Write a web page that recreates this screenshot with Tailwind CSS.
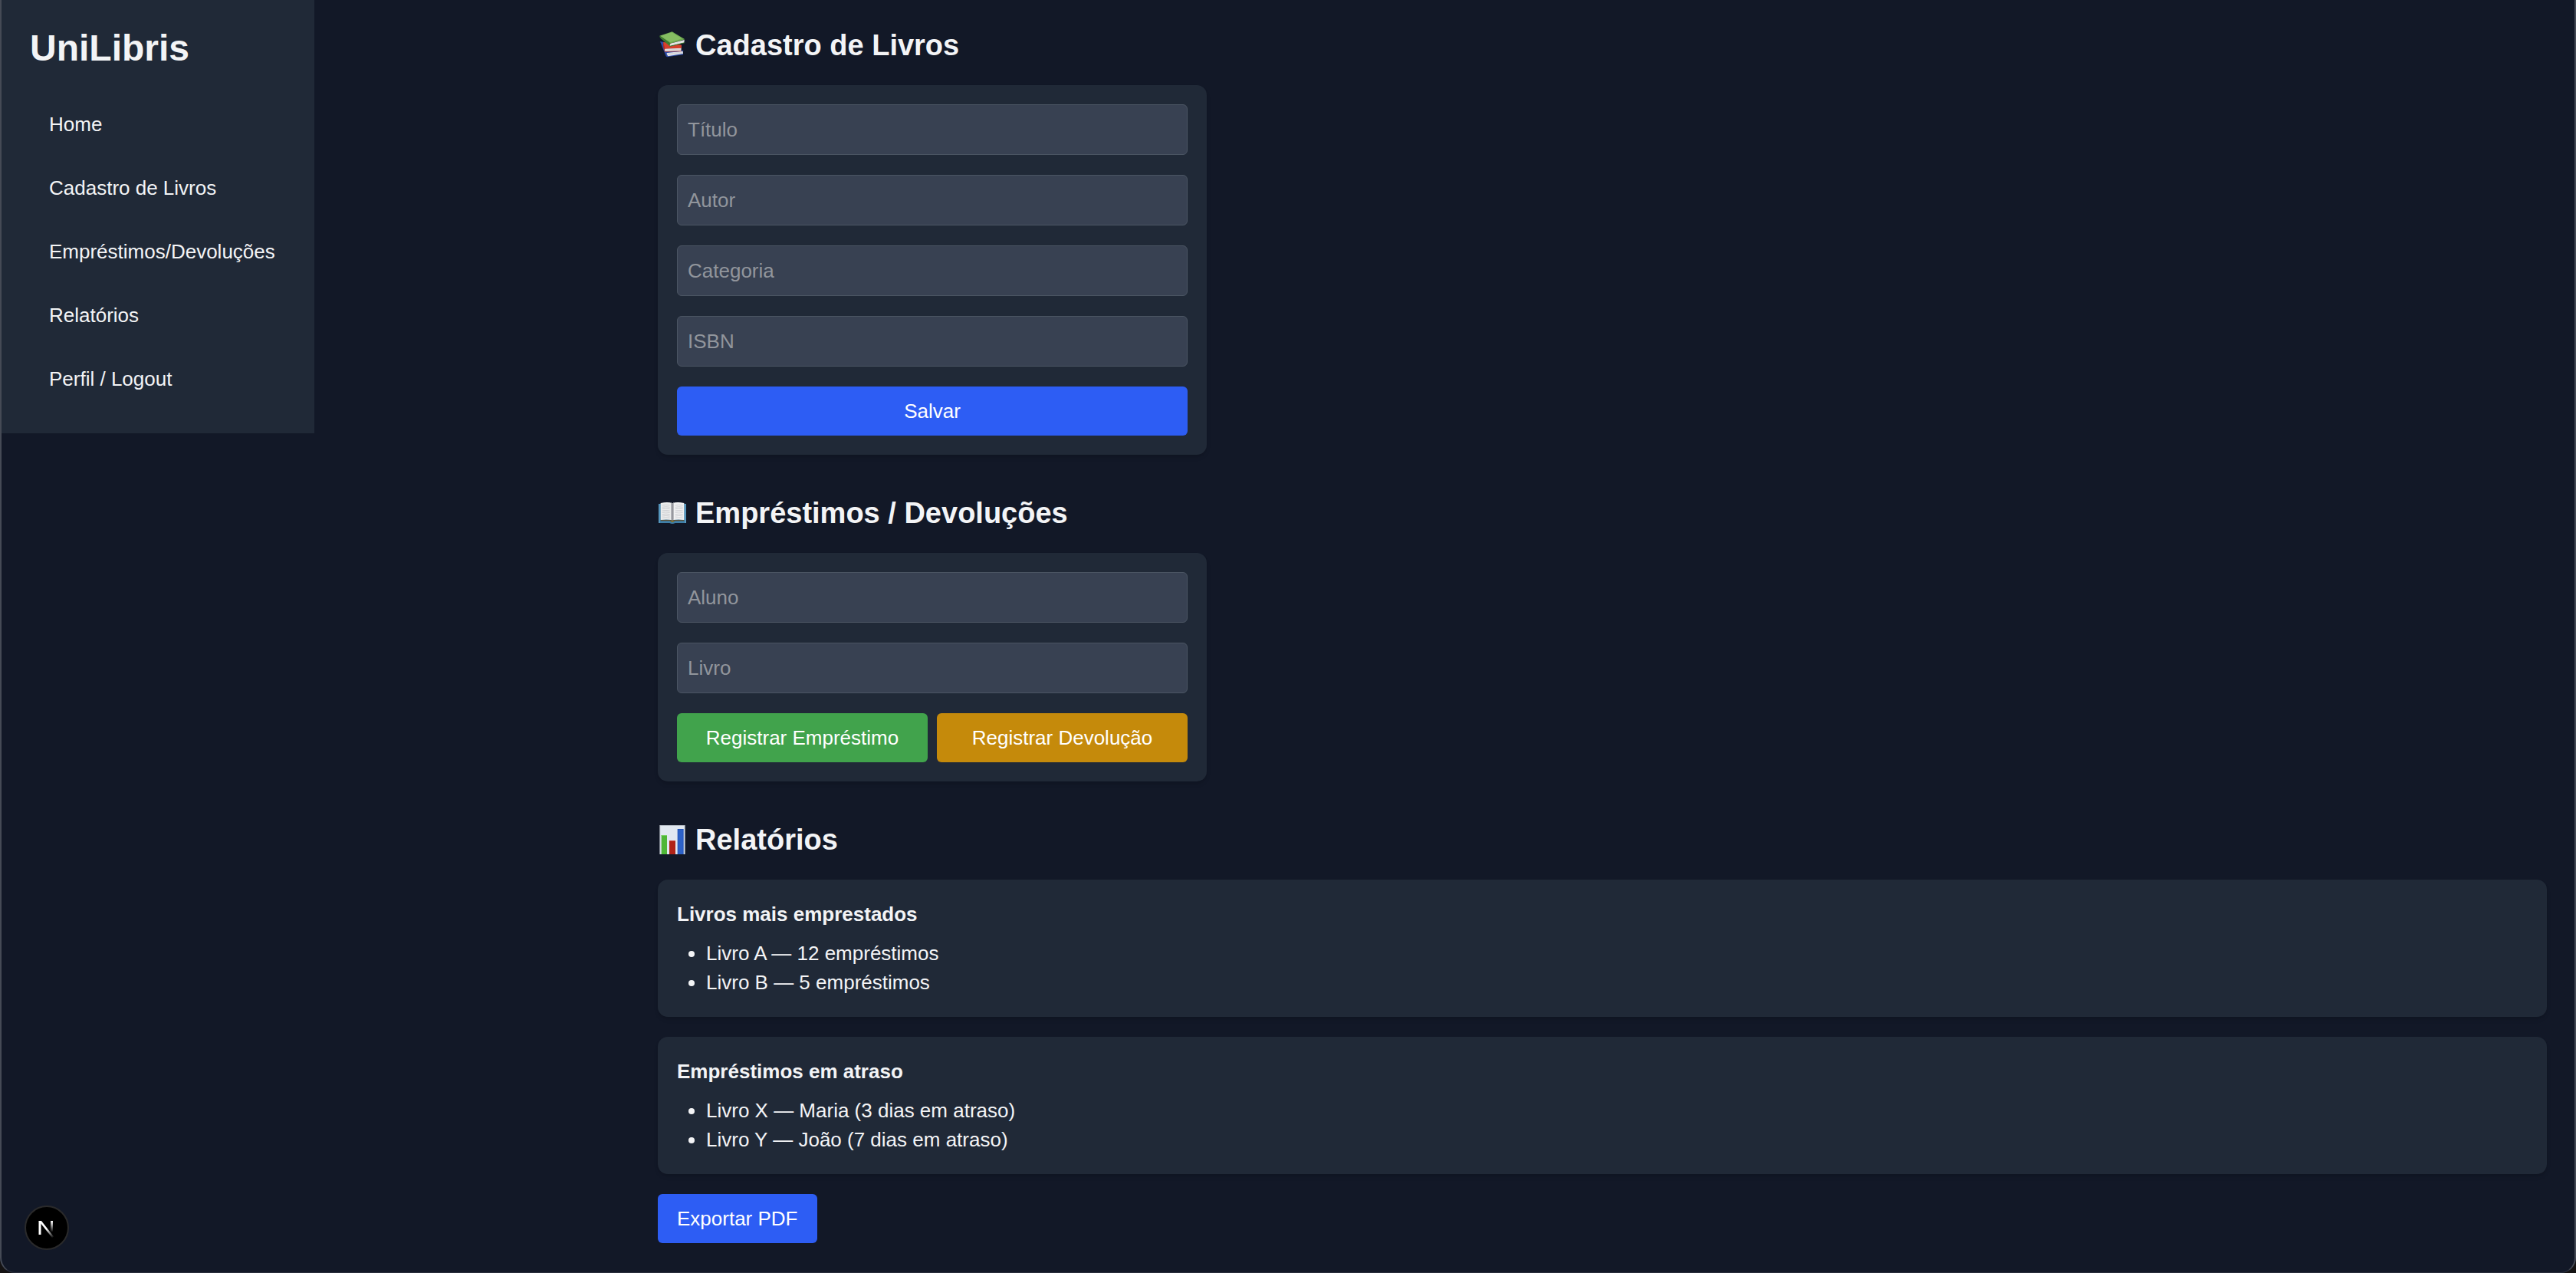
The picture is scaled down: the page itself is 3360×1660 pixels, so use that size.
<!DOCTYPE html>
<html lang="pt-BR">
<head>
<meta charset="utf-8">
<title>UniLibris</title>
<script src="https://cdn.jsdelivr.net/npm/@tailwindcss/browser@4"></script>
</head>
<body class="min-h-screen bg-[#121827] font-['Liberation_Sans',Arial,sans-serif] text-[26px] leading-[38px] text-gray-100">
<div class="flex items-start">
  <aside class="w-[410px] shrink-0 bg-[#202937] px-[39px] pt-[34px] pb-[39px]">
    <h1 class="mb-[38px] text-[48px] leading-[58px] font-bold">UniLibris</h1>
    <nav class="flex flex-col gap-[19px]">
      <a href="#" class="rounded-md px-[25px] py-[13px] whitespace-nowrap">Home</a>
      <a href="#cadastro" class="rounded-md px-[25px] py-[13px] whitespace-nowrap">Cadastro de Livros</a>
      <a href="#emprestimos" class="rounded-md px-[25px] py-[13px] whitespace-nowrap">Empréstimos/Devoluções</a>
      <a href="#relatorios" class="rounded-md px-[25px] py-[13px] whitespace-nowrap">Relatórios</a>
      <a href="#perfil" class="rounded-md px-[25px] py-[13px] whitespace-nowrap">Perfil / Logout</a>
    </nav>
  </aside>

  <main class="ml-[410px] flex min-w-0 flex-1 flex-col gap-[51px] px-[38px] pt-[34px] pb-[38px]">
    <section id="cadastro">
      <h2 class="mb-[26px] flex items-center gap-[11px] text-[38px] leading-[51px] font-bold">
        <svg class="h-[39px] w-[38px]" viewBox="24 30 114 117" aria-hidden="true">
          <path d="M33 72l12 2 78 36v14l-63 9-4-3z" fill="#2b4aa8"/>
          <path d="M59 117l63-7 1 10-59 10q-6-5-5-13z" fill="#e4e6ea"/>
          <path d="M60 121l61-7M61 125l61-7" stroke="#a9adb8" stroke-width="1"/>
          <path d="M56 114l68-6" stroke="#27449f" stroke-width="3"/>
          <path d="M45 74l72 12v12l-66 4z" fill="#d6402c"/>
          <path d="M45 74q-2 22 7 39l64-2v-3l-62-1z" fill="#b92b20"/>
          <path d="M52 101l64-3-1 11-62 2q-4-5-1-10z" fill="#e9e7e5"/>
          <path d="M53 105l62-3M54 108l61-3" stroke="#b5b1b0" stroke-width="1"/>
          <path d="M31 50l49-16 50 30-56 16z" fill="#6faa50"/>
          <path d="M35 50l44-13 40 24-46 14z" fill="#85bd62"/>
          <path d="M31 50l43 30-3 11-35-30q-6-6-5-11z" fill="#3d7f2e"/>
          <path d="M74 80l54-14-1 11-55 14q-3-5 2-11z" fill="#f3f4f1"/>
          <path d="M73 84l54-14M72 88l55-14" stroke="#b4b9b3" stroke-width="1"/>
          <path d="M71 91l59-14" stroke="#2f6b26" stroke-width="3"/>
        </svg>
        Cadastro de Livros
      </h2>
      <form class="flex max-w-[716px] flex-col gap-[26px] rounded-[13px] bg-[#202937] p-[25px] shadow-md">
        <input type="text" aria-label="Título" placeholder="Título" class="w-full rounded-md border border-[#4b5563] bg-[#384152] px-[13px] py-[13px] placeholder:text-[#91959c]">
        <input type="text" aria-label="Autor" placeholder="Autor" class="w-full rounded-md border border-[#4b5563] bg-[#384152] px-[13px] py-[13px] placeholder:text-[#91959c]">
        <input type="text" aria-label="Categoria" placeholder="Categoria" class="w-full rounded-md border border-[#4b5563] bg-[#384152] px-[13px] py-[13px] placeholder:text-[#91959c]">
        <input type="text" aria-label="ISBN" placeholder="ISBN" class="w-full rounded-md border border-[#4b5563] bg-[#384152] px-[13px] py-[13px] placeholder:text-[#91959c]">
        <button type="button" class="w-full rounded-md bg-[#2d5df4] py-[13px] text-white">Salvar</button>
      </form>
    </section>

    <section id="emprestimos">
      <h2 class="mb-[26px] flex items-center gap-[11px] text-[38px] leading-[51px] font-bold">
        <svg class="h-[39px] w-[38px]" viewBox="24 30 114 117" aria-hidden="true">
          <path d="M27 51h108v75H92q-11 6-22 0H27z" fill="#3f7fa8"/>
          <path d="M27 51h5v75h-5zM130 51h5v75h-5z" fill="#5a9cc4"/>
          <path d="M35 113h92v5H91q-10 8-20 0H35z" fill="#5b5136"/>
          <path d="M74 118h14q-1 5-7 5t-7-5z" fill="#8b7a2c"/>
          <path d="M35 48q30-6 46 1v66q-20-5-46-1z" fill="#eceded"/>
          <path d="M127 48q-30-6-46 1v66q20-5 46-1z" fill="#f2f2f3"/>
          <path d="M75 46l6 3v66l-6-2zM87 46l-6 3v66l6-2z" fill="#b9bbc0"/>
          <path d="M81 48v68" stroke="#55565c" stroke-width="2"/>
          <path d="M41 57q15-3 30 0M41 64q15-3 30 0M41 71q15-3 30 0M41 78q15-3 30 0M41 85q15-3 30 0M41 92q15-3 30 0M41 99q15-3 30 0M41 106q15-3 30 0M92 57q15-3 30 0M92 64q15-3 30 0M92 71q15-3 30 0M92 78q15-3 30 0M92 85q15-3 30 0M92 92q15-3 30 0M92 99q15-3 30 0M92 106q15-3 30 0" fill="none" stroke="#b9bbc1" stroke-width="2"/>
        </svg>
        Empréstimos / Devoluções
      </h2>
      <form class="flex max-w-[716px] flex-col gap-[26px] rounded-[13px] bg-[#202937] p-[25px] shadow-md">
        <input type="text" aria-label="Aluno" placeholder="Aluno" class="w-full rounded-md border border-[#4b5563] bg-[#384152] px-[13px] py-[13px] placeholder:text-[#91959c]">
        <input type="text" aria-label="Livro" placeholder="Livro" class="w-full rounded-md border border-[#4b5563] bg-[#384152] px-[13px] py-[13px] placeholder:text-[#91959c]">
        <div class="grid grid-cols-2 gap-[12px]">
          <button type="button" class="rounded-md bg-[#41a34c] py-[13px] text-white">Registrar Empréstimo</button>
          <button type="button" class="rounded-md bg-[#c58a0b] py-[13px] text-white">Registrar Devolução</button>
        </div>
      </form>
    </section>

    <section id="relatorios">
      <h2 class="mb-[26px] flex items-center gap-[11px] text-[38px] leading-[51px] font-bold">
        <svg class="h-[39px] w-[38px]" viewBox="24 33 114 117" aria-hidden="true">
          <path d="M31 33h100v114H31z" fill="#b9c0c9"/>
          <path d="M34 36h94v111H34z" fill="#e1e8f1"/>
          <path d="M38 72h22v75H38z" fill="#4fb737"/>
          <path d="M38 72h22v3H38z" fill="#77cf62"/>
          <path d="M69 93h24v54H69z" fill="#b02318"/>
          <path d="M69 93h24v3H69z" fill="#cc4a3e"/>
          <path d="M101 48h24v99h-24z" fill="#2456b8"/>
          <path d="M104 51h18v96h-18z" fill="#2d62c8"/>
        </svg>
        Relatórios
      </h2>
      <div class="flex flex-col items-start gap-[26px]">
        <article class="w-full rounded-[13px] bg-[#202937] px-[25px] py-[26px] shadow-md">
          <h3 class="mb-[13px] font-bold">Livros mais emprestados</h3>
          <ul class="list-disc pl-[38px]">
            <li>Livro A — 12 empréstimos</li>
            <li>Livro B — 5 empréstimos</li>
          </ul>
        </article>
        <article class="w-full rounded-[13px] bg-[#202937] px-[25px] py-[26px] shadow-md">
          <h3 class="mb-[13px] font-bold">Empréstimos em atraso</h3>
          <ul class="list-disc pl-[38px]">
            <li>Livro X — Maria (3 dias em atraso)</li>
            <li>Livro Y — João (7 dias em atraso)</li>
          </ul>
        </article>
        <button type="button" class="rounded-md bg-[#2d5df4] px-[25px] py-[13px] text-white">Exportar PDF</button>
      </div>
    </section>
  </main>
</div>

<button type="button" aria-label="Next.js" class="fixed bottom-[30px] left-[32px] size-[58px] rounded-full">
  <svg class="size-full" viewBox="0 0 58 58" fill="none" aria-hidden="true">
    <defs>
      <linearGradient id="stem" x1="0" y1="20" x2="0" y2="35" gradientUnits="userSpaceOnUse"><stop stop-color="#fff"/><stop offset="1" stop-color="#fff" stop-opacity="0"/></linearGradient>
      <linearGradient id="diag" x1="29" y1="30" x2="38" y2="42" gradientUnits="userSpaceOnUse"><stop stop-color="#fff"/><stop offset="1" stop-color="#fff" stop-opacity="0"/></linearGradient>
    </defs>
    <circle cx="29" cy="29" r="28" fill="#000" stroke="#2a2a2b" stroke-width="2"/>
    <path d="M20 38V20" stroke="#fff" stroke-width="3"/>
    <path d="M18.500 20h3.500L38 40.500l-2 1.500z" fill="url(#diag)"/>
    <path d="M35.500 20v14" stroke="url(#stem)" stroke-width="3"/>
  </svg>
</button>

<!-- window frame -->
<div class="pointer-events-none fixed inset-0 overflow-hidden" aria-hidden="true">
  <div class="size-full rounded-b-[20px] border-x-2 border-b border-x-[#454a55] border-b-[#2b303d] shadow-[0_0_0_20px_#151313]"></div>
</div>
</body>
</html>
